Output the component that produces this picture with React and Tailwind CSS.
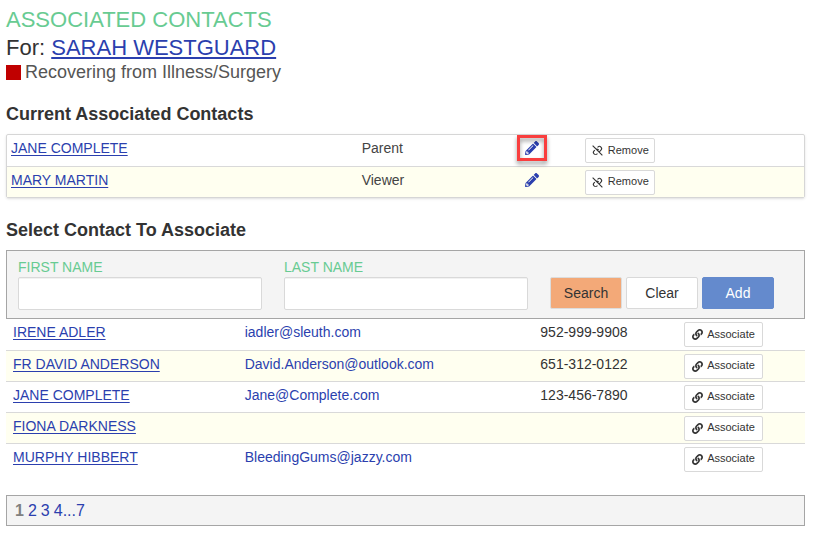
import { useState } from "react";
import { FaLink, FaPencilAlt } from "react-icons/fa";
import { BiUnlink } from "react-icons/bi";

const associated = [
  { id: 1, name: "JANE COMPLETE", role: "Parent", highlighted: true },
  { id: 2, name: "MARY MARTIN", role: "Viewer", highlighted: false },
];

const contacts = [
  { id: 1, name: "IRENE ADLER", email: "iadler@sleuth.com", phone: "952-999-9908" },
  { id: 2, name: "FR DAVID ANDERSON", email: "David.Anderson@outlook.com", phone: "651-312-0122" },
  { id: 3, name: "JANE COMPLETE", email: "Jane@Complete.com", phone: "123-456-7890" },
  { id: 4, name: "FIONA DARKNESS", email: "", phone: "" },
  { id: 5, name: "MURPHY HIBBERT", email: "BleedingGums@jazzy.com", phone: "" },
];

const link = "text-[#2b3fae] underline underline-offset-2";
const smallButton =
  "inline-flex h-[25px] items-center gap-1 rounded-xs border border-[#d9d9d9] bg-white text-[11px] text-[#333]";
const bigButton = "h-8 w-[72px] shrink-0 rounded-xs border text-sm";

function SearchField({ id, label, value, onChange }) {
  return (
    <div className="min-w-0 flex-1">
      <label htmlFor={id} className="block text-sm leading-4 text-[#68cb92]">
        {label}
      </label>
      <input
        id={id}
        type="text"
        value={value}
        onChange={(e) => onChange(e.target.value)}
        className="mt-[2px] block h-[33px] w-full rounded-xs border border-[#d9d9d9] bg-white px-2 text-sm inset-shadow-2xs"
      />
    </div>
  );
}

function AssociatedTable() {
  return (
    <div className="rounded-xs border border-[#d6d6d6] shadow-sm">
      <table className="w-full table-fixed">
        <tbody>
          {associated.map((c) => (
            <tr
              key={c.id}
              className="h-[31px] border-b border-[#d9d9d9] last:border-b-0 even:bg-[#fffff0]"
            >
              <td className="w-[44%] px-1 pt-1 align-top leading-[18px]">
                <a href="#" className={link}>{c.name}</a>
              </td>
              <td className="w-[20%] px-1 pt-1 align-top leading-[18px] text-[#444]">{c.role}</td>
              <td className="w-[8%] px-1 pt-1 align-top">
                <button aria-label={`Edit ${c.name}`} className="relative ml-1 block py-[2px]">
                  <FaPencilAlt className="size-[14px] text-[#2b3fae]" />
                  {c.highlighted && (
                    <span className="absolute -inset-x-2 -top-1 -bottom-1 border-3 border-[#f93e3e] drop-shadow-[0_3px_2px_rgba(0,0,0,0.4)]" />
                  )}
                </button>
              </td>
              <td className="px-1 pt-[3px] align-top">
                <button className={`${smallButton} px-[5px]`}>
                  <BiUnlink className="size-[13px]" />
                  Remove
                </button>
              </td>
            </tr>
          ))}
        </tbody>
      </table>
    </div>
  );
}

function ContactsTable() {
  return (
    <table className="w-full table-fixed">
      <tbody>
        {contacts.map((c) => (
          <tr
            key={c.id}
            className="h-[31px] border-b border-[#d9d9d9] last:border-b-0 even:bg-[#fffff0]"
          >
            <td className="w-[29%] px-[7px] pt-1 align-top leading-[18px]">
              <a href="#" className={link}>{c.name}</a>
            </td>
            <td className="w-[37%] px-[7px] pt-1 align-top leading-[18px]">
              {c.email && (
                <a href={`mailto:${c.email}`} className="text-[#2b3fae]">{c.email}</a>
              )}
            </td>
            <td className="w-[18%] px-[7px] pt-1 align-top leading-[18px]">{c.phone}</td>
            <td className="px-[7px] pt-[3px] align-top">
              <button className={`${smallButton} px-[7px]`}>
                <FaLink className="size-[11px]" />
                Associate
              </button>
            </td>
          </tr>
        ))}
      </tbody>
    </table>
  );
}

function App() {
  const [firstName, setFirstName] = useState("");
  const [lastName, setLastName] = useState("");

  const clear = () => {
    setFirstName("");
    setLastName("");
  };

  return (
    <main className="bg-white pt-1 pr-[9px] pb-2 pl-[6px] font-['Liberation_Sans',Arial,sans-serif] text-sm text-[#333]">
      {/* Header */}
      <h1 className="text-[22px] leading-8 text-[#68cb92]">ASSOCIATED CONTACTS</h1>
      <h2 className="text-[22px] leading-6">
        For: <a href="#" className={link}>SARAH WESTGUARD</a>
      </h2>
      <p className="flex items-center gap-1 text-lg leading-6 text-[#555]">
        <span className="size-[15px] bg-[#c00000]" />
        Recovering from Illness/Surgery
      </p>

      {/* Current contacts */}
      <h3 className="mt-[18px] mb-2 text-lg leading-6 font-bold">Current Associated Contacts</h3>
      <AssociatedTable />

      {/* Search */}
      <h3 className="mt-5 mb-2 text-lg leading-6 font-bold">Select Contact To Associate</h3>
      <form
        onSubmit={(e) => e.preventDefault()}
        className="flex items-end gap-[22px] border border-[#a5a5a5] bg-[#f4f4f4] pt-2 pr-[30px] pb-2 pl-[11px]"
      >
        <SearchField id="first-name" label="FIRST NAME" value={firstName} onChange={setFirstName} />
        <SearchField id="last-name" label="LAST NAME" value={lastName} onChange={setLastName} />
        <div className="mb-px flex gap-1">
          <button type="submit" className={`${bigButton} border-[#dcdcdc] bg-[#f3a978]`}>
            Search
          </button>
          <button
            type="button"
            onClick={clear}
            className={`${bigButton} border-[#d9d9d9] bg-white`}
          >
            Clear
          </button>
          <button type="button" className={`${bigButton} border-[#648acd] bg-[#648acd] text-white`}>
            Add
          </button>
        </div>
      </form>
      <ContactsTable />

      {/* Paging */}
      <nav
        aria-label="Pages"
        className="mt-[21px] flex gap-1 border border-[#a5a5a5] bg-[#f4f4f4] px-2 text-base leading-[29px] text-[#2b3fae]"
      >
        <span className="font-bold text-[#808080]">1</span>
        <a href="#">2</a>
        <a href="#">3</a>
        <span>
          <a href="#">4</a>
          <a href="#">...</a>
          <a href="#">7</a>
        </span>
      </nav>
    </main>
  );
}

export default App;
